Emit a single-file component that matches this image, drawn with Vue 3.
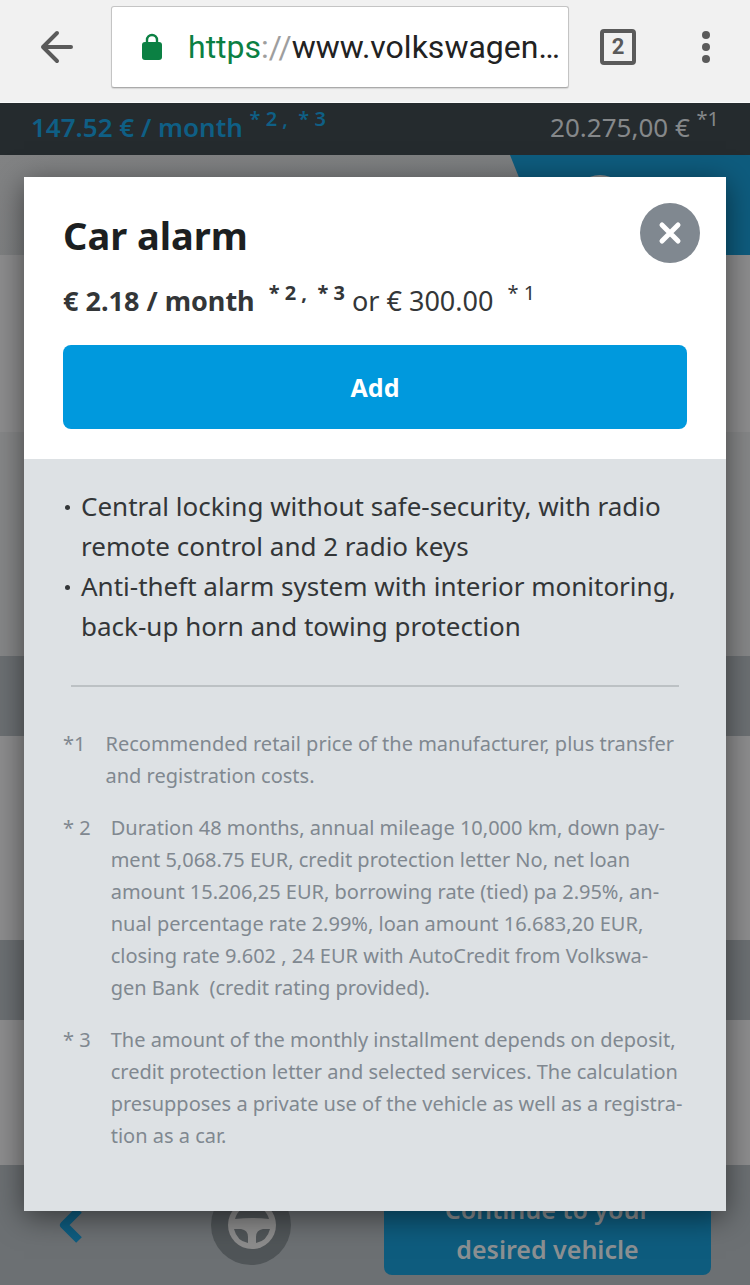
<script setup>
const features = [
  'Central locking without safe-security, with radio remote control and 2 radio keys',
  'Anti-theft alarm system with interior monitoring, back-up horn and towing protection',
]

const notes = [
  {
    mark: '*1',
    lines: ['Recommended retail price of the manufacturer, plus transfer', 'and registration costs.'],
  },
  {
    mark: '* 2',
    lines: [
      'Duration 48 months, annual mileage 10,000 km, down pay-',
      'ment 5,068.75 EUR, credit protection letter No, net loan',
      'amount 15.206,25 EUR, borrowing rate (tied) pa 2.95%, an-',
      'nual percentage rate 2.99%, loan amount 16.683,20 EUR,',
      'closing rate 9.602 , 24 EUR with AutoCredit from Volkswa-',
      'gen Bank\u00a0 (credit rating provided).',
    ],
  },
  {
    mark: '* 3',
    lines: [
      'The amount of the monthly installment depends on deposit,',
      'credit protection letter and selected services. The calculation',
      'presupposes a private use of the vehicle as well as a registra-',
      'tion as a car.',
    ],
  },
]
</script>

<template>
  <div class="screen">
    <header class="toolbar">
      <button class="icon-button" type="button" aria-label="Back">
        <svg width="34" height="34" viewBox="0 0 34 34" fill="none" stroke="#5a5a5a" stroke-width="4" stroke-linecap="round" stroke-linejoin="round">
          <path d="M17 3 3 17l14 14M3 17h28" />
        </svg>
      </button>
      <button class="address" type="button" aria-label="Address bar">
        <svg width="20" height="28" viewBox="0 0 20 28">
          <path d="M5 11V7a5 5 0 0 1 10 0v4" fill="none" stroke="#0b8043" stroke-width="2.4" />
          <rect y="9" width="20" height="18" rx="3" fill="#0b8043" />
        </svg>
        <span class="url"><span class="scheme">https</span><span class="slashes">://</span>www.volkswagen…</span>
      </button>
      <button class="tabs" type="button" aria-label="Open tabs">2</button>
      <button class="icon-button menu" type="button" aria-label="Menu">
        <svg width="10" height="34" viewBox="0 0 10 34" fill="#5a5a5a">
          <circle cx="5" cy="5" r="4" /><circle cx="5" cy="17" r="4" /><circle cx="5" cy="29" r="4" />
        </svg>
      </button>
    </header>

    <div class="price-bar">
      <strong class="rate">147.52 € / month <sup>* 2 ,&nbsp; * 3</sup></strong>
      <span class="total">20.275,00 € <sup>*1</sup></span>
    </div>

    <div class="page">
      <div class="strip"><div class="corner"><span class="ring"></span></div></div>
      <div class="band hero"></div>
      <div class="band details"></div>
      <div class="band heading"></div>
      <div class="band item"></div>
      <div class="band heading"></div>
      <div class="band last"></div>
      <footer class="actions">
        <button class="icon-button previous" type="button" aria-label="Previous">
          <svg width="24" height="36" viewBox="0 0 24 36" fill="none" stroke="#0e5d80" stroke-width="8" stroke-linejoin="round">
            <path d="M20 3 5 18l15 15" />
          </svg>
        </button>
        <button class="icon-button drive" type="button" aria-label="Test drive">
          <svg width="80" height="80" viewBox="0 0 80 80">
            <circle cx="40" cy="40" r="40" fill="#505558" />
            <circle cx="41" cy="40" r="24" fill="#8c8c8c" />
            <path d="M24 34C26 26 33 21 41 21s15 5 17 13q-17-2-34 0ZM23 44h7q7 1 7 8v6q-11-2-14-14ZM59 44h-7q-7 1-7 8v6q11-2 14-14Z" fill="#505558" />
          </svg>
        </button>
        <button class="continue" type="button">Continue to your desired vehicle</button>
      </footer>

      <section class="dialog" role="dialog" aria-labelledby="dialog-title">
        <div class="summary">
          <div class="title-row">
            <h1 id="dialog-title">Car alarm</h1>
            <button class="close" type="button" aria-label="Close">
              <svg width="24" height="24" viewBox="0 0 24 24" fill="none" stroke="#fff" stroke-width="5" stroke-linecap="round">
                <path d="m4 4 16 16M20 4 4 20" />
              </svg>
            </button>
          </div>
          <p class="price">
            <strong>€ 2.18 / month&nbsp; <sup>* 2 ,&nbsp; * 3</sup></strong> or € 300.00&nbsp; <sup>* 1</sup>
          </p>
          <button class="add" type="button">Add</button>
        </div>
        <div class="description">
          <ul class="features">
            <li v-for="feature in features" :key="feature">{{ feature }}</li>
          </ul>
          <hr />
          <div v-for="note in notes" :key="note.mark" class="note">
            <span>{{ note.mark }}</span>
            <p><template v-for="(line, i) in note.lines" :key="line"><br v-if="i" />{{ line }}</template></p>
          </div>
        </div>
      </section>
    </div>
  </div>
</template>

<style>
body {
  background: #6c7073;
}
</style>

<style scoped>
.screen {
  font-family: "Noto Sans", "Open Sans", sans-serif;
  font-size: 26px;
  line-height: 40px;
  color: #333638;
}

.screen *,
.screen {
  box-sizing: border-box;
}

button {
  font: inherit;
  border: 0;
  padding: 0;
  cursor: pointer;
}

strong {
  font-weight: 600;
}

sup {
  font-size: 20px;
  line-height: 0;
  vertical-align: 11px;
}

svg {
  display: block;
}

.icon-button {
  background: none;
}

.toolbar {
  display: flex;
  align-items: center;
  padding: 6px 39px 14px 40px;
  background: #f1f1f1;
  border-bottom: 1px solid #fafafa;
}

.address {
  display: flex;
  align-items: center;
  flex: 1;
  min-width: 0;
  height: 82px;
  margin: 0 31px 0 37px;
  padding: 0 8px 0 30px;
  gap: 26px;
  background: #fff;
  border: 1px solid #c4c4c4;
  border-bottom-color: #aaa;
  border-radius: 3px;
  box-shadow: 0 1px 1px #d5d5d5;
  color: #222;
  font: 32px/40px Roboto, sans-serif;
  white-space: nowrap;
  overflow: hidden;
}

.scheme {
  color: #0b8043;
}

.slashes {
  color: #9e9e9e;
}

.tabs {
  width: 36px;
  height: 36px;
  margin-right: 65px;
  border: 4px solid #5a5a5a;
  border-radius: 4px;
  background: none;
  color: #5a5a5a;
  font: bold 22px/26px Roboto, sans-serif;
}

.price-bar {
  display: flex;
  justify-content: space-between;
  padding: 4px 31px 8px;
  background: #252b2e;
  color: #85888a;
}

.rate {
  color: #0f5f85;
}

.page {
  position: relative;
}

.strip {
  display: flex;
  justify-content: flex-end;
  height: 100px;
  background: linear-gradient(165deg, #828384, #777a7c);
}

.corner {
  width: 32%;
  padding: 20px 0 0 65px;
  background: #0e5c7e;
  clip-path: polygon(0 0, 100% 0, 100% 100%, 40px 100%);
}

.ring {
  display: block;
  width: 50px;
  height: 50px;
  border: 4px solid #8c8c8c;
  border-radius: 50%;
}

.band {
  background: #8d8d8e;
}

.hero {
  height: 177px;
}

.details {
  height: 224px;
  background: #868788;
}

.heading {
  height: 80px;
  background: #6c7073;
}

.item {
  height: 204px;
}

.last {
  height: 145px;
}

.actions {
  display: grid;
  grid-template-columns: 78px 1fr minmax(0, 327px);
  align-items: center;
  padding: 10px 39px;
  background: #6c7073;
}

.previous {
  padding-left: 20px;
  justify-self: start;
}

.drive {
  justify-self: center;
}

.continue {
  padding: 14px 50px 6px;
  border-radius: 8px;
  background: #0e5c7e;
  color: #8c9092;
  font-size: 25px;
  font-weight: 600;
}

.dialog {
  position: absolute;
  top: 22px;
  left: 24px;
  right: 24px;
  box-shadow: 0 6px 28px rgba(0, 0, 0, 0.5);
}

.summary {
  padding: 26px 39px 30px;
  background: #fff;
}

.title-row {
  display: flex;
  justify-content: space-between;
  margin-right: -13px;
}

h1 {
  margin: 4px 0 0;
  color: #1c1f21;
  font-size: 38px;
  line-height: 56px;
}

.close {
  display: grid;
  place-items: center;
  width: 60px;
  height: 60px;
  border-radius: 50%;
  background: #808890;
}

.price {
  margin: 18px 0 24px;
  font-size: 27px;
}

.price strong {
  font-weight: 700;
}

.price sup {
  font-weight: inherit;
}

.add {
  width: 100%;
  padding: 22px;
  border-radius: 8px;
  background: #0099dd;
  color: #fff;
  font-size: 25px;
  font-weight: 700;
}

.description {
  padding: 27px 39px 59px;
  background: #dde1e4;
}

.features {
  margin: 0;
  padding: 0;
  list-style: none;
}

.features li {
  display: flex;
}

.features li::before {
  content: "";
  flex: none;
  width: 5px;
  height: 5px;
  margin: 19px 11px 0 2px;
  border-radius: 50%;
  background: #333638;
}

hr {
  height: 2px;
  margin: 39px 8px 41px;
  border: 0;
  background: #bcc1c4;
}

.note {
  display: flex;
  gap: 20px;
  color: #808890;
  font-size: 20px;
  line-height: 32px;
  white-space: nowrap;
}

.note + .note {
  margin-top: 20px;
}

.note p {
  margin: 0;
}
</style>
